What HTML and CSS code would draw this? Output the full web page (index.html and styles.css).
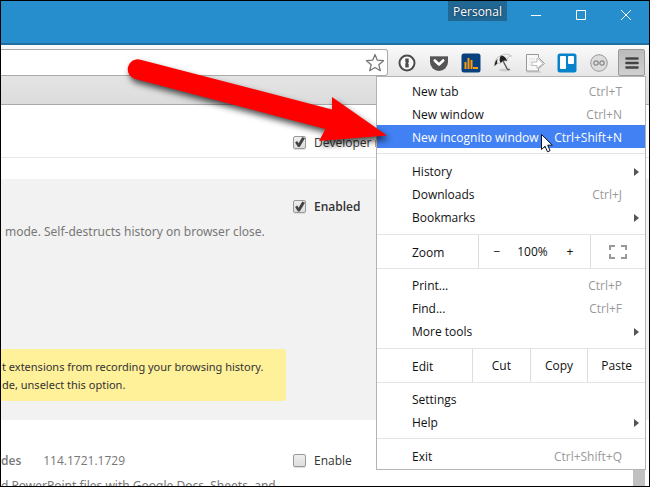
FILE: index.html
```html
<!DOCTYPE html>
<html lang="en">
<head>
<meta charset="utf-8">
<title>Extensions</title>
<link rel="stylesheet" href="styles.css">
</head>
<body>
<div class="window">
  <header class="titlebar">
    <button class="profile">Personal</button>
    <button class="winbtn" aria-label="Minimize"><svg width="12" height="12" viewBox="0 0 12 12"><path d="M1 6.500h10"/></svg></button>
    <button class="winbtn" aria-label="Maximize"><svg width="12" height="12" viewBox="0 0 12 12"><path d="M1.500 1.500h9v9h-9z"/></svg></button>
    <button class="winbtn" aria-label="Close"><svg width="12" height="12" viewBox="0 0 12 12"><path d="M1 1l10 10M11 1L1 11"/></svg></button>
  </header>

  <div class="toolbar">
    <div class="omnibox">
      <input class="address" type="text" aria-label="Address">
      <button class="star" aria-label="Bookmark this page"><svg width="20" height="20" viewBox="0 0 20 20"><path d="M10 1.500l2.300 5.700 6.200.5-4.700 4 1.500 6-5.300-3.200-5.300 3.200 1.500-6-4.700-4 6.200-.5z" fill="#fff" stroke="#777" stroke-width="1.300" stroke-linejoin="round"/></svg></button>
    </div>
    <div class="extensions">
      <button class="ext" aria-label="Password manager"><svg width="20" height="20" viewBox="0 0 20 20"><circle cx="10" cy="10" r="7.500" fill="#fafafa" stroke="#4c4c4c" stroke-width="2"/><path d="M8.300 5.500h3.400v4l-.8.8.8.800v3.400H8.300v-4l.8-.8-.8-.8z" fill="#4c4c4c"/></svg></button>
      <button class="ext" aria-label="Save for later"><svg width="20" height="20" viewBox="0 0 20 20"><path d="M1 4q0-1 1-1h16q1 0 1 1v5a9 9 0 0 1-18 0z" fill="#555"/><path d="M1.500 3.500h17" stroke="#888"/><path d="M5.800 7.500L10 11.500l4.200-4" fill="none" stroke="#fff" stroke-width="2.600" stroke-linecap="round" stroke-linejoin="round"/></svg></button>
      <button class="ext" aria-label="Analytics"><svg width="20" height="20" viewBox="0 0 20 20"><rect x="0.500" y="0.500" width="19" height="19" rx="2.500" fill="#07427f"/><path d="M4.500 16V9M7.500 16V5M10.500 16V7M12 15h5" fill="none" stroke="#ff9a0c" stroke-width="2"/></svg></button>
      <button class="ext" aria-label="Umbrella"><svg width="20" height="20" viewBox="0 0 20 20"><ellipse cx="12" cy="17" rx="6" ry="1.500" fill="#ccc"/><path d="M9 6l5 9.500q1 2 2.500.5" fill="none" stroke="#555" stroke-width="1.400"/><path d="M1.500 13Q1 5 8 2.500 14-.5 18.500 3 14 3.500 14 8 11 6.500 7.500 10 4 9.500 1.500 13z" fill="#eee" stroke="#aaa" stroke-width=".6"/><path d="M8 2.500Q13 3 14 8 11 6.500 7.500 10 5.500 6 8 2.500zM1.500 13Q2 8 4.500 5.500 4 8 4.200 10.500z" fill="#222"/></svg></button>
      <button class="ext" aria-label="Clipper"><svg width="20" height="20" viewBox="0 0 20 20"><path d="M2 19h14" stroke="#ccc" stroke-width="1.500"/><path d="M1.500 1.500h12v3l6 6-6 5v2.500h-12z" fill="#f7f7f7" stroke="#999"/><path d="M4 6h6M4 9h3M4 12h3" stroke="#ddd"/><path d="M7 9h5V5l6 5.500-6 5v-3H7z" fill="#fff" stroke="#bbb"/></svg></button>
      <button class="ext" aria-label="Boards"><svg width="20" height="20" viewBox="0 0 20 20"><rect x="0.500" y="0.500" width="19" height="19" rx="2.500" fill="#0782cb"/><rect x="3" y="3" width="6" height="13" rx="1" fill="#fff"/><rect x="11" y="3" width="6" height="8" rx="1" fill="#fff"/></svg></button>
      <button class="ext" aria-label="Reader"><svg width="20" height="20" viewBox="0 0 20 20"><circle cx="10" cy="10" r="8.300" fill="#ddd" stroke="#999"/><g fill="none" stroke="#888" stroke-width="1.200"><circle cx="7" cy="10" r="2.200"/><circle cx="13" cy="10" r="2.200"/></g></svg></button>
    </div>
    <button class="menubtn" aria-label="Menu" aria-expanded="true"><svg width="14" height="14" viewBox="0 0 14 14"><path d="M1.500 2.500h11M1.500 7h11M1.500 11.500h11" stroke="#444" stroke-width="2.600" stroke-linecap="round"/></svg></button>
  </div>
  <div class="bookmarks"></div>

  <main class="page">
    <section class="devrow columns">
      <span></span>
      <label class="check"><input type="checkbox" checked>Developer mode</label>
    </section>
    <section class="item active">
      <div class="columns">
        <span></span>
        <label class="check strong"><input type="checkbox" checked>Enabled</label>
      </div>
      <p class="desc">mode. Self-destructs history on browser close.</p>
      <p class="notice">t extensions from recording your browsing history.<br>de, unselect this option.</p>
    </section>
    <section class="item">
      <div class="columns">
        <h2 class="name"><b>des</b><span>114.1721.1729</span></h2>
        <label class="check"><input type="checkbox">Enable</label>
      </div>
      <p class="desc cut">d PowerPoint files with Google Docs, Sheets, and</p>
    </section>
  </main>

  <div class="scrollbar"></div>

  <nav class="menu" aria-label="Browser menu">
    <div class="group first">
      <button class="entry">New tab<kbd>Ctrl+T</kbd></button>
      <button class="entry">New window<kbd>Ctrl+N</kbd></button>
      <button class="entry selected">New incognito window<kbd>Ctrl+Shift+N</kbd></button>
    </div>
    <div class="group roomy">
      <button class="entry more">History</button>
      <button class="entry">Downloads<kbd>Ctrl+J</kbd></button>
      <button class="entry more">Bookmarks</button>
    </div>
    <div class="group split zoom">
      <span class="caption">Zoom</span>
      <div class="stepper"><button>−</button><span>100%</span><button>+</button></div>
      <button class="full" aria-label="Full screen"><svg width="18" height="14" viewBox="0 0 18 14"><path d="M1 5V1h5M12 1h5v4M17 9v4h-5M6 13H1V9" fill="none" stroke="#999" stroke-width="2"/></svg></button>
    </div>
    <div class="group">
      <button class="entry">Print...<kbd>Ctrl+P</kbd></button>
      <button class="entry">Find...<kbd>Ctrl+F</kbd></button>
      <button class="entry more">More tools</button>
    </div>
    <div class="group split edit">
      <span class="caption">Edit</span>
      <button>Cut</button>
      <button>Copy</button>
      <button>Paste</button>
    </div>
    <div class="group tight">
      <button class="entry">Settings</button>
      <button class="entry more">Help</button>
    </div>
    <div class="group last">
      <button class="entry">Exit<kbd>Ctrl+Shift+Q</kbd></button>
    </div>
  </nav>

  <svg class="arrow" width="290" height="110" viewBox="0 0 290 110"><path d="M29.500 19.400L222 69.500V57l55 38.500-68 5.500 6.500-12L24.500 38.700A10 10 0 0 1 29.500 19.400z" fill="#fe0000" transform="translate(-10 -20)"/></svg>
  <svg class="pointer" width="14" height="21" viewBox="0 0 14 21"><path d="M1.500 1.500v15l3.500-3.300 2.500 5.600 2.600-1.100-2.400-5.500h4.700z" fill="#fff" stroke="#112" stroke-linejoin="round"/></svg>
</div>
</body>
</html>
```
FILE: styles.css
```css
* { box-sizing: border-box; }

body {
  margin: 0;
  font: 12px/17px "Open Sans", "Noto Sans", sans-serif;
  color: #333;
}

button {
  margin: 0;
  padding: 0;
  border: 0;
  background: none;
  font: inherit;
  color: inherit;
}

svg { display: block; }

.window {
  position: relative;
  display: flex;
  flex-direction: column;
  height: 100vh;
  border: 1px solid #000;
  background: #fff;
  overflow: hidden;
}

.titlebar {
  flex: none;
  display: flex;
  align-items: flex-start;
  justify-content: flex-end;
  height: 44px;
  padding-right: 1px;
  background: #278ece;
  border-bottom: 2px solid #20709f;
}

.profile {
  width: 59px;
  height: 20px;
  margin-right: 6px;
  background: #206793;
  color: #fff;
  text-shadow: 0 0 2px #123;
}

.winbtn {
  display: grid;
  place-items: center;
  width: 45px;
  height: 28px;
}

.winbtn path { fill: none; stroke: #fff; }

.toolbar {
  flex: none;
  display: flex;
  align-items: center;
  height: 31px;
  padding-right: 4px;
  background: linear-gradient(#fafafa, #e6e6e6);
}

.omnibox {
  flex: 1;
  display: flex;
  align-items: center;
  height: 27px;
  margin-top: 4px;
  padding-right: 2px;
  background: #fff;
  border: 1px solid #aaa;
  border-left: 0;
  border-radius: 0 3px 3px 0;
}

.address {
  flex: 1;
  min-width: 0;
  border: 0;
  outline: 0;
  background: none;
}

.extensions {
  display: flex;
  gap: 12px;
  margin: 4px 9px 0 9px;
}

.menubtn {
  display: grid;
  place-items: center;
  width: 27px;
  height: 27px;
  margin-top: 4px;
  border: 1px solid #999;
  border-radius: 2px;
  background: linear-gradient(#bbb, #d0d0d0);
}

.bookmarks {
  flex: none;
  height: 29px;
  border-bottom: 1px solid #aaa;
  background: linear-gradient(#e4e4e4, #dcdcdc);
}

.page {
  flex: 1;
  min-height: 0;
  overflow: hidden;
}

.columns {
  display: grid;
  grid-template-columns: 292px 1fr;
  align-items: center;
}

.devrow {
  height: 53px;
  margin-bottom: 21px;
  padding-top: 22px;
  border-bottom: 1px solid #e8e8e8;
}

.check {
  display: flex;
  align-items: center;
  gap: 8px;
}

.strong { font-weight: 600; }

.check input {
  appearance: none;
  width: 13px;
  height: 13px;
  margin: 0;
  border: 1px solid #999;
  border-radius: 2px;
  background: linear-gradient(#eee, #ddd);
  box-shadow: 0 1px 1px #ddd;
}

.check input:checked::before {
  content: "";
  display: block;
  height: 11px;
  background: #444;
  clip-path: polygon(10% 55%, 28% 42%, 42% 62%, 75% 5%, 100% 15%, 52% 95%, 36% 95%);
}

.item { padding-top: 32px; }

.item.active {
  height: 241px;
  padding-top: 19px;
  background: #f2f2f2;
}

.desc {
  margin: 8px 0 0 4px;
  font-family: "Noto Sans", sans-serif;
  color: #777;
}

.desc.cut { margin-left: 0; }

.notice {
  width: 285px;
  margin: 109px 0 0;
  padding: 9px 0 7px 1px;
  border-radius: 0 3px 3px 0;
  background: #fff09a;
  font-family: "Noto Sans", sans-serif;
  font-size: 11px;
  line-height: 18px;
}

.name {
  display: flex;
  gap: 22px;
  margin: 0;
  font-size: 12px;
  font-weight: 400;
  color: #777;
}

.name b { font-weight: 600; }

.scrollbar {
  position: absolute;
  top: 104px;
  right: 4px;
  bottom: 0;
  width: 12px;
  background: #c1c1c1;
}

.menu {
  position: absolute;
  top: 75px;
  right: 3px;
  width: 270px;
  border: 1px solid #b4b4b4;
  background: #fff;
  color: #111;
}

.group {
  padding: 5px 0;
  border-bottom: 1px solid #e4e4e4;
}

.group.first { padding-top: 2px; }
.group.roomy { padding-top: 6px; }
.group.tight { padding-bottom: 4px; }
.group.last { padding: 6px 0 1px; border-bottom: 0; }

.entry {
  position: relative;
  display: flex;
  align-items: center;
  justify-content: space-between;
  width: 100%;
  height: 23px;
  padding: 0 23px 0 35px;
  text-align: left;
}

.first .entry { padding-top: 2px; }

.entry kbd { font: inherit; color: #999; }

.entry.selected { background: #4281f4; color: #fff; }
.entry.selected kbd { color: #fff; }

.entry.more::after {
  content: "";
  margin-right: -17px;
  border: 4px solid transparent;
  border-left: 5px solid #555;
  border-right: 0;
}

.group.split {
  display: grid;
  height: 34px;
  padding: 0;
}

.zoom { grid-template-columns: 101px 1fr 55px; }
.edit { grid-template-columns: 95px 1fr 1fr 1fr; }

.caption { padding: 9px 0 0 35px; }

.edit button,
.stepper,
.full {
  border-left: 1px solid #ddd;
}

.stepper {
  display: grid;
  grid-template-columns: 36px 1fr 40px;
  align-items: center;
  text-align: center;
}

.full {
  display: grid;
  place-items: center;
}

.arrow {
  position: absolute;
  left: 119px;
  top: 59px;
  overflow: visible;
  filter: drop-shadow(2px 4px 3px rgba(0, 0, 0, .7));
  pointer-events: none;
}

.pointer {
  position: absolute;
  left: 539px;
  top: 132px;
  pointer-events: none;
}
```
